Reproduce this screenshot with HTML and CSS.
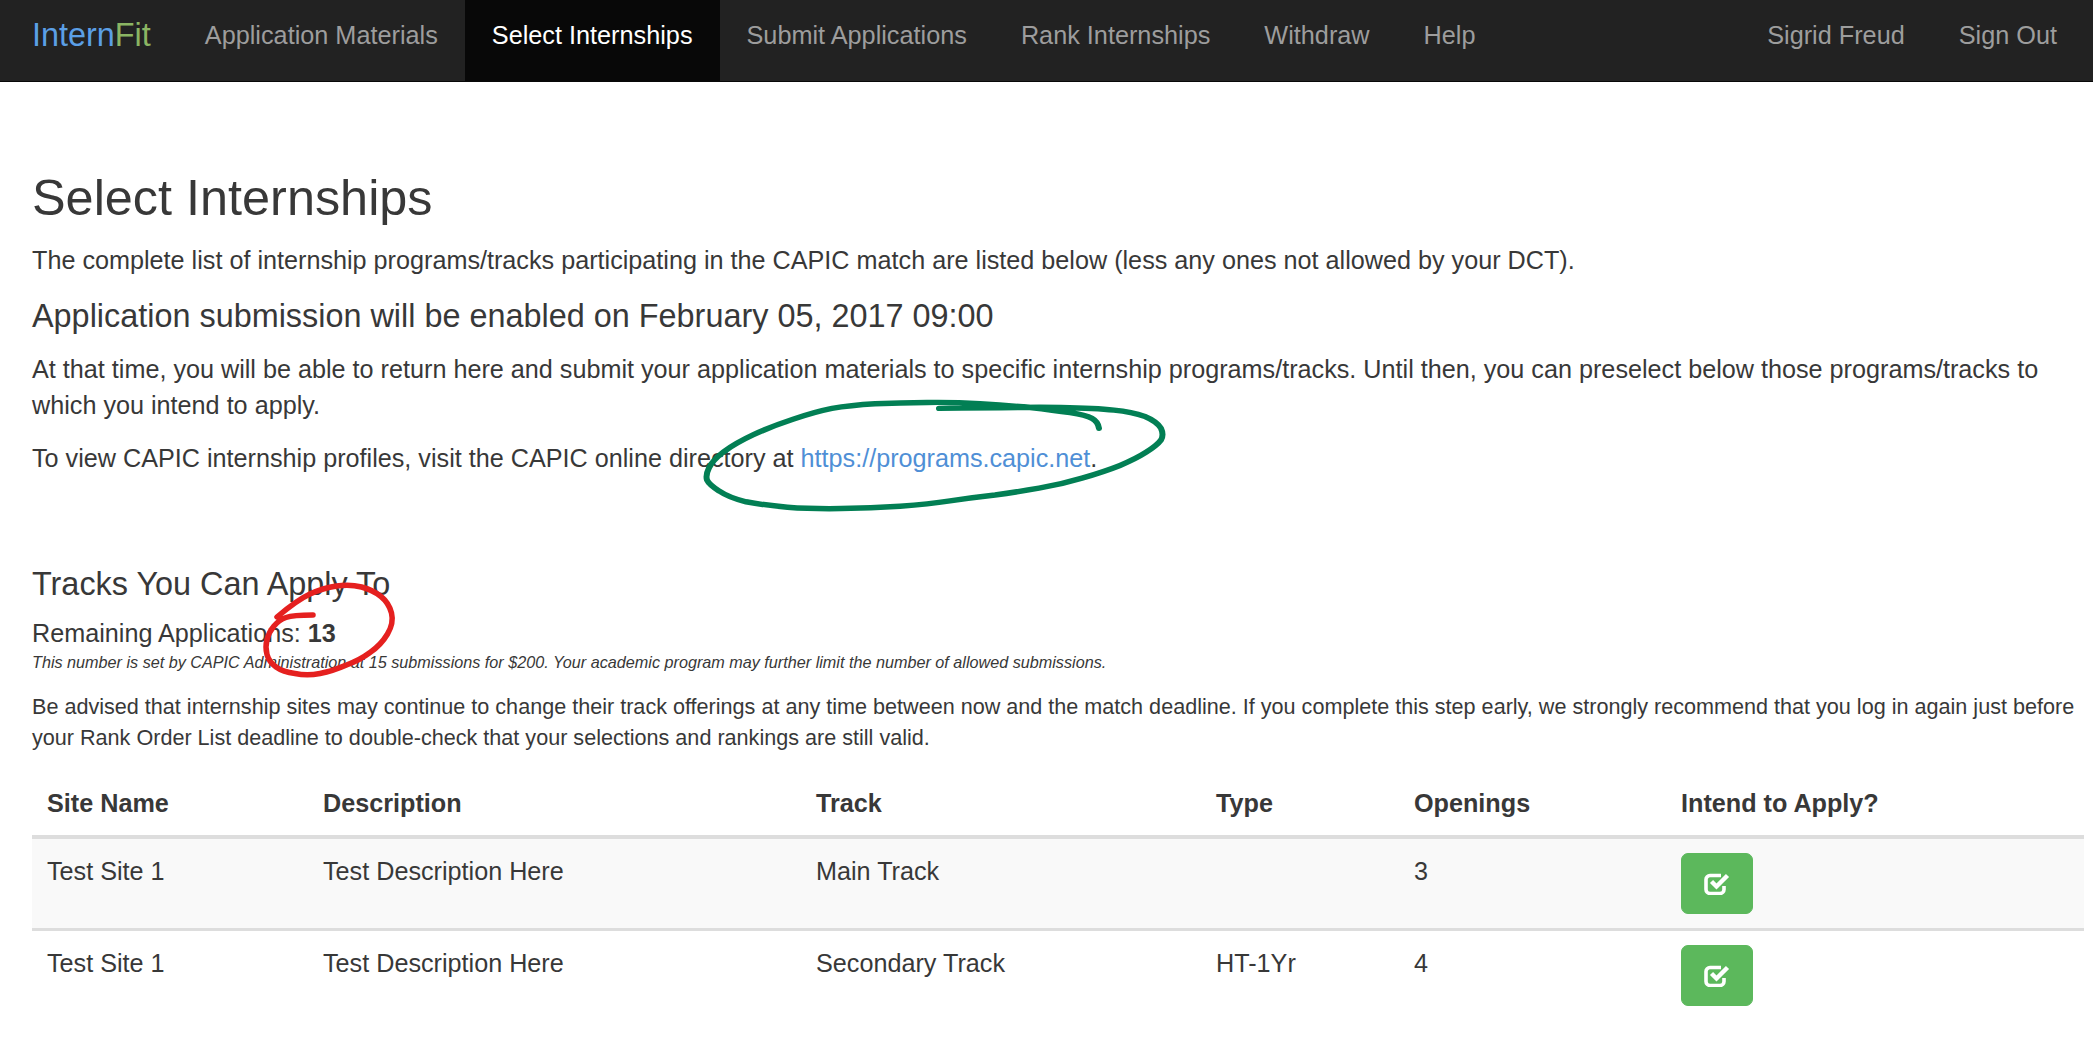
FILE: index.html
```html
<!DOCTYPE html>
<html lang="en">
<head>
<meta charset="utf-8">
<title>Select Internships</title>
<link rel="stylesheet" href="styles.css">
</head>
<body>
<nav class="navbar">
  <a class="brand"><span class="brand-a">Intern</span><span class="brand-b">Fit</span></a>
  <ul class="nav-list">
    <li><a>Application Materials</a></li>
    <li class="active"><a>Select Internships</a></li>
    <li><a>Submit Applications</a></li>
    <li><a>Rank Internships</a></li>
    <li><a>Withdraw</a></li>
    <li><a>Help</a></li>
  </ul>
  <ul class="nav-list nav-right">
    <li><a>Sigrid Freud</a></li>
    <li><a>Sign Out</a></li>
  </ul>
</nav>
<main class="content">
  <h1>Select Internships</h1>
  <p class="intro">The complete list of internship programs/tracks participating in the CAPIC match are listed below (less any ones not allowed by your DCT).</p>
  <h3>Application submission will be enabled on February 05, 2017 09:00</h3>
  <p class="para">At that time, you will be able to return here and submit your application materials to specific internship programs/tracks. Until then, you can preselect below those programs/tracks to which you intend to apply.</p>
  <p class="para">To view CAPIC internship profiles, visit the CAPIC online directory at <a class="link">https://programs.capic.net</a>.</p>
  <h4>Tracks You Can Apply To</h4>
  <div class="remaining">Remaining Applications: <strong>13</strong></div>
  <div class="note">This number is set by CAPIC Administration at 15 submissions for $200. Your academic program may further limit the number of allowed submissions.</div>
  <p class="advice">Be advised that internship sites may continue to change their track offerings at any time between now and the match deadline. If you complete this step early, we strongly recommend that you log in again just before your Rank Order List deadline to double-check that your selections and rankings are still valid.</p>
  <table class="tracks">
    <colgroup><col class="c1"><col class="c2"><col class="c3"><col class="c4"><col class="c5"><col class="c6"></colgroup>
    <thead>
      <tr><th>Site Name</th><th>Description</th><th>Track</th><th>Type</th><th>Openings</th><th>Intend to Apply?</th></tr>
    </thead>
    <tbody>
      <tr class="striped"><td>Test Site 1</td><td>Test Description Here</td><td>Main Track</td><td></td><td>3</td>
        <td><button class="apply" type="button"><svg class="check" viewBox="0 0 26 22"><path d="M20 13V16.5a4 4 0 0 1-4 4H6a4 4 0 0 1-4-4V6.5a4 4 0 0 1 4-4h11" fill="none" stroke="#fff" stroke-width="3.6"/><path d="M7.5 8.5L12.5 13.5L23.5 2.5" fill="none" stroke="#fff" stroke-width="4.4"/></svg></button></td></tr>
      <tr class="last"><td>Test Site 1</td><td>Test Description Here</td><td>Secondary Track</td><td>HT-1Yr</td><td>4</td>
        <td><button class="apply" type="button"><svg class="check" viewBox="0 0 26 22"><path d="M20 13V16.5a4 4 0 0 1-4 4H6a4 4 0 0 1-4-4V6.5a4 4 0 0 1 4-4h11" fill="none" stroke="#fff" stroke-width="3.6"/><path d="M7.5 8.5L12.5 13.5L23.5 2.5" fill="none" stroke="#fff" stroke-width="4.4"/></svg></button></td></tr>
    </tbody>
  </table>
</main>
<svg class="ink" viewBox="0 0 2093 1040" width="2093" height="1040">
  <path class="ink-green" transform="translate(0 37.4) scale(1 .907)" d="M939 409Q1025 407.5 1061 408Q1096 408.6 1114 411Q1132 413 1145 418Q1157 423.6 1161 431Q1164 438 1161 444Q1157 450 1146 457.5Q1136 464.6 1120 472Q1104 479 1082 486Q1061 493 1039 497Q1018 501 995 504.5Q971 507.5 950 511Q929 514.6 900 517Q871 519 841 519.5Q811 520 787.5 518Q764 515.7 746 512Q729 507.5 719 500Q709 493 707 488Q705.4 482.5 709 474.5Q712.5 466.4 724 456.6Q736 447 753.5 438Q771 429 793 421Q814 413 832 409Q850 405.7 875 404Q900 403 927 402.5Q954 402 980 404Q1007 405.7 1030 408Q1054 411 1070 413.7Q1086 416.4 1092 420Q1098 423.6 1099 431"/>
  <path class="ink-red" d="M313 615Q293 615 286 617.5Q279 620 274 626Q269 632 267 639.5Q265 647 267 654.5Q269 662 276 667Q283 672 295 673.5Q307 676 320 673.5Q333 671 346.5 665Q360 660 370 652.5Q381 645 387.5 634Q394 623 391.5 613Q389 603 381 596.5Q373 590 361.5 587Q350 584 336.5 586Q323 588 310 594Q297 600 277 617"/>
</svg>
</body>
</html>
```
FILE: styles.css
```css
* { box-sizing: border-box; }
html, body { margin: 0; padding: 0; }
body {
  position: relative;
  height: 1040px;
  overflow: hidden;
  background: #fff;
  color: #383838;
  font-family: "Liberation Sans", Arial, sans-serif;
  font-size: 25.2px;
  line-height: 36px;
}
.navbar {
  display: flex;
  height: 82px;
  background: #222;
  border-bottom: 1px solid #080808;
  padding-left: 32px;
}
.brand {
  font-size: 32.4px;
  line-height: 70px;
  padding-right: 27px;
}
.brand-a { color: #5b9fe6; }
.brand-b { color: #8bb563; }
.nav-list {
  display: flex;
  list-style: none;
  margin: 0;
  padding: 0;
  font-size: 25.25px;
}
.nav-list a {
  display: block;
  padding: 0 27px;
  line-height: 70px;
  color: #9d9d9d;
}
.nav-list .active a { background: #080808; color: #fff; height: 81px; }
.nav-right { margin-left: auto; padding-right: 9px; }
.content { padding: 0 9px 0 32px; }
h1 {
  margin: 82px 0 0;
  font-size: 50.4px;
  font-weight: 400;
  line-height: 68px;
}
.intro { margin: 10px 0 0; }
h3 {
  margin: 18px 0 0;
  font-size: 32.4px;
  font-weight: 400;
  line-height: 40px;
}
.para { margin: 15px 0 0; }
.para + .para { margin-top: 17px; }
h4 {
  margin: 88px 0 0;
  font-size: 32.4px;
  font-weight: 400;
  line-height: 40px;
}
.remaining { margin-top: 11px; }
.note {
  font-size: 16.2px;
  font-style: italic;
  line-height: 22px;
  margin-top: 0;
}
.advice { margin: 18px 0 0; font-size: 21.6px; line-height: 31px; }
.link { color: #4f8fd6; }
.tracks {
  width: 100%;
  table-layout: fixed;
  border-collapse: collapse;
  margin-top: 18px;
}
.c1 { width: 276px; }
.c2 { width: 493px; }
.c3 { width: 400px; }
.c4 { width: 198px; }
.c5 { width: 267px; }
.tracks th, .tracks td {
  padding: 14px 15px;
  text-align: left;
  vertical-align: top;
  font-size: 25.2px;
  line-height: 36px;
}
.tracks th { border-bottom: 4px solid #ddd; padding-bottom: 14px; }
.tracks td { border-bottom: 3px solid #ddd; }
.tracks .last td { border-bottom: 0; }
.striped { background: #f9f9f9; }
.apply {
  display: flex;
  align-items: center;
  justify-content: center;
  width: 72px;
  height: 61px;
  padding: 0;
  border: 1px solid #5cb85c;
  border-radius: 7px;
  background: #5cb85c;
}
.check { width: 26px; height: 22px; }
.ink {
  position: absolute;
  top: 0;
  left: 0;
  pointer-events: none;
}
.ink-green { fill: none; stroke: #027f54; stroke-width: 6; stroke-linecap: round; }
.ink-red { fill: none; stroke: #e5201f; stroke-width: 5.5; stroke-linecap: round; }
```
